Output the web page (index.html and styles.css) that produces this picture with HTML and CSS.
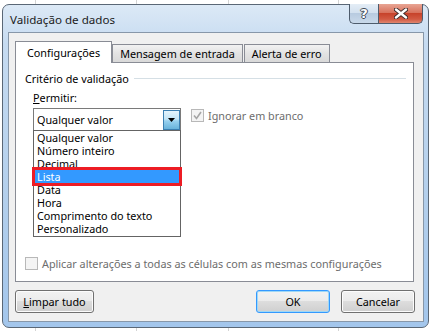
FILE: index.html
```html
<!DOCTYPE html>
<html lang="pt">
<head>
    <meta charset="UTF-8">
    <title>Validação de dados</title>
    <link rel="stylesheet" href="styles.css">
</head>
<body>
    <div class="window">
        <div class="titlebar">
            <span class="title">Validação de dados</span>
            <div class="caption-btns">
                <span class="cap-btn help">?</span>
                <span class="cap-btn close">
                    <svg width="14" height="11" viewBox="0 0 14 11">
                        <path d="M2 1.5 L12 9.5 M12 1.5 L2 9.5" stroke="#3a2a2a" stroke-width="4.2" stroke-linecap="round"/>
                        <path d="M2 1.5 L12 9.5 M12 1.5 L2 9.5" stroke="#fff" stroke-width="2.4" stroke-linecap="round"/>
                    </svg>
                </span>
            </div>
        </div>
        <div class="client">
            <div class="tabs">
                <span class="tab active">Configurações</span>
                <span class="tab">Mensagem de entrada</span>
                <span class="tab">Alerta de erro</span>
            </div>
            <div class="panel">
                <div class="group-title">
                    <span>Critério de validação</span>
                    <span class="rule"></span>
                </div>
                <div class="group-body">
                    <div class="label"><u>P</u>ermitir:</div>
                    <div class="row">
                        <div class="combo-col">
                            <div class="combo">
                                <span class="combo-text">Qualquer valor</span>
                                <span class="drop-btn">
                                    <svg width="7" height="4" viewBox="0 0 7 4"><path d="M0 0 H7 L3.5 4 Z" fill="#000"/></svg>
                                </span>
                            </div>
                            <ul class="list">
                                <li>Qualquer valor</li>
                                <li>Número inteiro</li>
                                <li>Decimal</li>
                                <li class="selected">Lista</li>
                                <li>Data</li>
                                <li>Hora</li>
                                <li>Comprimento do texto</li>
                                <li>Personalizado</li>
                            </ul>
                        </div>
                        <div class="check disabled">
                            <span class="box">
                                <svg width="11" height="11" viewBox="0 0 11 11"><path d="M2 5.5 L4.5 8.5 L9 2" fill="none" stroke="#a6a6a6" stroke-width="1.6"/></svg>
                            </span>
                            <span>Ignorar em branco</span>
                        </div>
                    </div>
                </div>
                <div class="check disabled apply">
                    <span class="box"></span>
                    <span>Aplicar alterações a todas as células com as mesmas configurações</span>
                </div>
            </div>
            <div class="buttons">
                <span class="btn clear"><u>L</u>impar tudo</span>
                <span class="spacer"></span>
                <span class="btn default">OK</span>
                <span class="btn">Cancelar</span>
            </div>
        </div>
    </div>
</body>
</html>
```

FILE: styles.css
```css
html, body {
    margin: 0;
    padding: 0;
}
body {
    width: 432px;
    height: 331px;
    overflow: hidden;
    font-family: "Noto Sans", "Open Sans", sans-serif;
    font-size: 10.8px;
    color: #000;
    background-color: #fff;
    background-image:
        linear-gradient(#d4d4d4, #d4d4d4),
        linear-gradient(#d4d4d4, #d4d4d4),
        linear-gradient(#d4d4d4, #d4d4d4),
        linear-gradient(#d4d4d4, #d4d4d4);
    background-size: 1px 100%;
    background-repeat: no-repeat;
    background-position: 35px 0, 136px 0, 228px 0, 338px 0;
}
.window {
    box-sizing: border-box;
    width: 427px;
    height: 324px;
    margin: 4px 0 0 2px;
    border: 1px solid #5a6776;
    border-radius: 7px;
    background: linear-gradient(to bottom, #dce9f6 0%, #c6dbf1 12%, #b3cfec 60%, #a3c6ec 100%);
    display: flex;
    flex-direction: column;
}
.titlebar {
    height: 27px;
    display: flex;
    align-items: flex-start;
    padding: 0 5px 0 7px;
}
.title {
    flex: 1;
    line-height: 29px;
    font-size: 11.6px;
    color: #1b1b1b;
}
.caption-btns {
    display: flex;
    margin-top: -1px;
}
.cap-btn {
    box-sizing: border-box;
    height: 20px;
    display: flex;
    align-items: center;
    justify-content: center;
    border: 1px solid #4e5c6c;
    border-top: none;
}
.help {
    width: 29px;
    border-right: none;
    border-radius: 0 0 0 5px;
    background: linear-gradient(to bottom, #e4edf6 0%, #d3e1ef 45%, #b8cbe0 50%, #c9d9ea 100%);
    font-family: "DejaVu Sans", sans-serif;
    font-weight: bold;
    font-size: 13px;
    color: #fff;
    text-shadow: -1px 0 #3f4a57, 1px 0 #3f4a57, 0 -1px #3f4a57, 0 1px #3f4a57;
}
.close {
    width: 45px;
    border-radius: 0 0 5px 0;
    background: linear-gradient(to bottom, #e8a594 0%, #d8735e 45%, #c7432b 50%, #d25a43 80%, #e0866f 100%);
}
.client {
    box-sizing: border-box;
    height: 290px;
    margin: 0 4px 0 5px;
    border: 1px solid #8797a9;
    background-color: #f0f0f0;
    padding: 8px 8px 7px 6px;
    display: flex;
    flex-direction: column;
}
.tabs {
    display: flex;
    align-items: flex-end;
    height: 21px;
    position: relative;
    z-index: 1;
}
.tab {
    box-sizing: border-box;
    height: 18px;
    padding: 0 7px;
    border: 1px solid #898c95;
    border-bottom: none;
    background: linear-gradient(to bottom, #f2f2f2, #e3e3e3 50%, #d9d9d9);
    line-height: 17px;
    margin-right: 1px;
}
.tab.active {
    height: 22px;
    margin-bottom: -1px;
    margin-right: 0;
    padding: 0 11px;
    background: #fff;
    line-height: 21px;
}
.panel {
    box-sizing: border-box;
    height: 220px;
    width: 399px;
    border: 1px solid #898c95;
    background: #fff;
    padding: 8px 7px 10px 9px;
    display: flex;
    flex-direction: column;
}
.group-title {
    display: flex;
    align-items: center;
    line-height: 15px;
    gap: 5px;
}
.rule {
    flex: 1;
    height: 1px;
    background: #d5dfe5;
}
.group-body {
    padding-left: 8px;
    margin-top: 4px;
}
.label {
    line-height: 15px;
}
.row {
    display: flex;
    align-items: flex-start;
    margin-top: 3px;
}
.combo-col {
    width: 148px;
}
.combo {
    box-sizing: border-box;
    height: 22px;
    border: 1px solid #7a7a7a;
    border-bottom: none;
    display: flex;
    align-items: flex-start;
    padding: 1px 0 0 3px;
}
.combo-text {
    flex: 1;
    line-height: 19px;
}
.drop-btn {
    box-sizing: border-box;
    width: 17px;
    height: 20px;
    border: 1px solid #3c7fb1;
    background: linear-gradient(to bottom, #e5f4fc 0%, #c4e5f6 45%, #98d1ef 55%, #68b3db 100%);
    display: flex;
    align-items: center;
    justify-content: center;
}
.list {
    box-sizing: border-box;
    list-style: none;
    margin: 0;
    padding: 0 1px 1px 1px;
    border: 1px solid #646464;
}
.list li {
    height: 13px;
    line-height: 13px;
    padding-left: 2px;
}
.list li.selected {
    background: #3399ff;
    color: #fff;
    outline: 3px solid #ed1c24;
    outline-offset: 0;
}
.check {
    display: flex;
    align-items: center;
    gap: 4px;
    line-height: 15px;
}
.check.disabled {
    color: #6d6d6d;
}
.row .check {
    margin: 0 0 0 10px;
    padding-top: 0;
}
.box {
    box-sizing: border-box;
    width: 13px;
    height: 13px;
    border: 1px solid #b8b8b8;
    background: #f4f4f4;
    display: flex;
    align-items: center;
    justify-content: center;
}
.apply {
    margin-top: auto;
}
.buttons {
    display: flex;
    margin-top: 8px;
    gap: 11px;
}
.spacer {
    flex: 1;
}
.btn {
    box-sizing: border-box;
    width: 74px;
    height: 23px;
    border: 1px solid #707070;
    border-radius: 3px;
    background: linear-gradient(to bottom, #f2f2f2 0%, #ebebeb 49%, #dddddd 50%, #cfcfcf 100%);
    display: flex;
    align-items: center;
    justify-content: center;
    box-shadow: inset 0 0 0 1px #fcfcfc;
}
.btn.clear {
    width: 79px;
}
.btn.default {
    border-color: #3399ff;
    box-shadow: inset 0 0 0 1px #9fd8f6;
}
```
